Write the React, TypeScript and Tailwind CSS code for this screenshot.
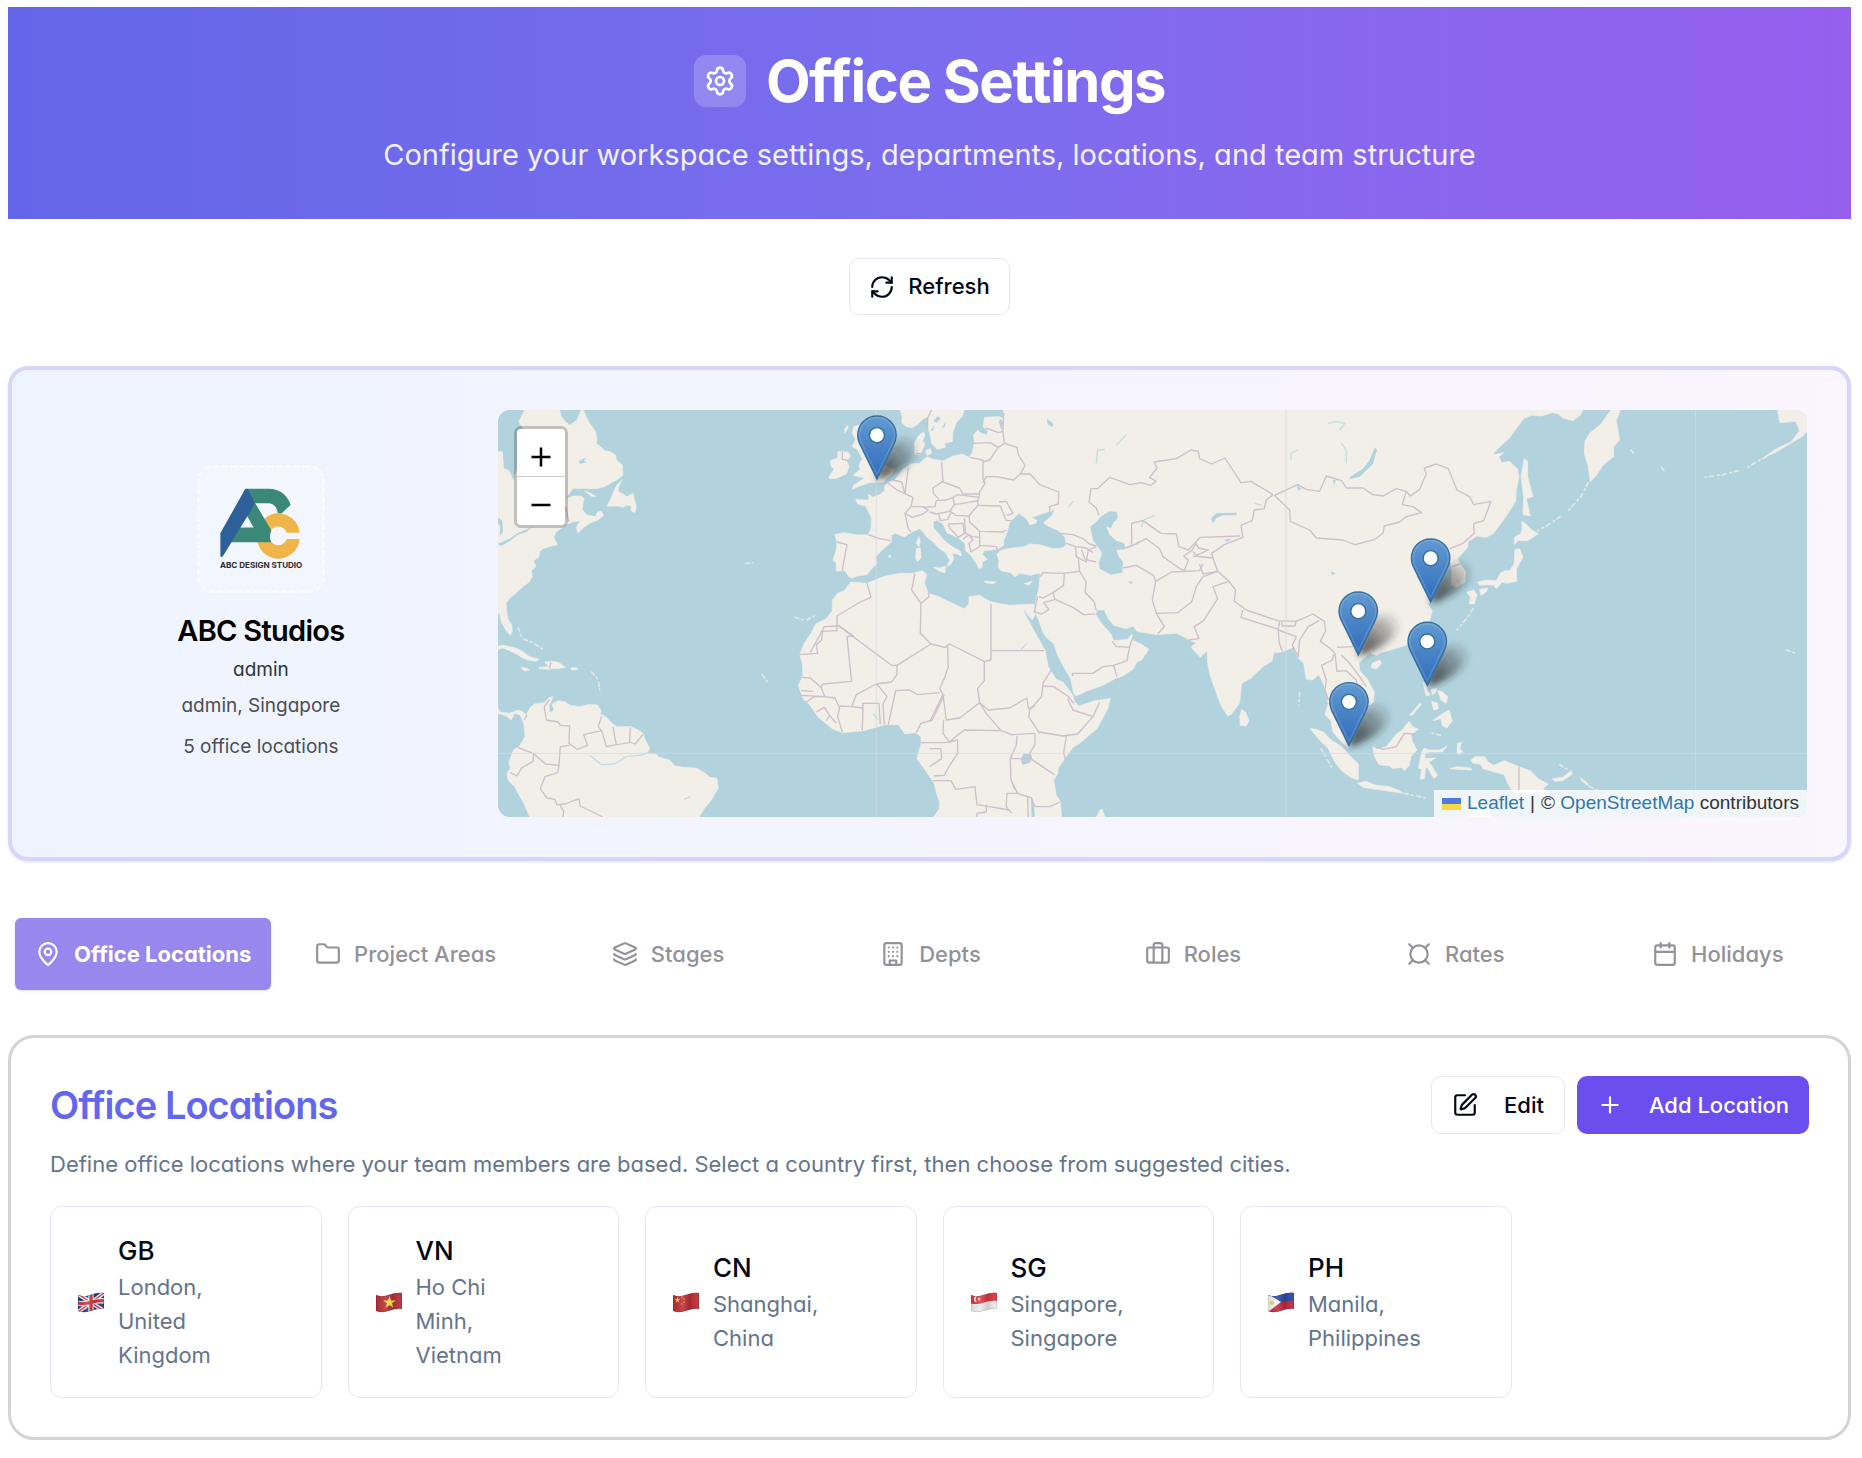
import React from "react";
import {
  Briefcase,
  Calendar,
  Currency,
  Folder,
  Layers,
  MapPin,
  Plus,
  RefreshCw,
  Settings,
  SquarePen,
} from "lucide-react";

/* ---------- map ---------- */

// The chart is digitised in three sheets that share one coordinate system.
const SHEETS = { a: 0, b: 1320, c: 2640 };
type Part = [keyof typeof SHEETS, string];

function trace(parts: Part[]) {
  return parts
    .flatMap(([sheet, text]) =>
      text
        .trim()
        .split(/\s+/)
        .map((pair) => {
          const [x, y] = pair.split(",").map(Number);
          return `${x + SHEETS[sheet]},${y}`;
        }),
    )
    .join(" ");
}

const LAND: Part[][] = [
  // North America
  [["a", "24,155 38,155 40,180 42,205 58,212 72,243 84,200 96,150 100,85 88,65 105,30 210,30 215,50 228,66 240,76 262,60 275,30 283,33 290,52 300,70 318,95 322,118 320,130 335,142 345,152 362,155 378,165 380,180 398,195 400,225 385,238 370,245 345,260 320,266 250,265 232,290 228,298 250,288 275,288 284,296 280,306 278,330 292,345 318,350 322,338 334,333 342,346 325,360 300,370 285,380 265,398 260,382 272,362 250,366 232,372 215,385 200,395 192,412 203,434 178,440 160,446 150,455 148,470 132,482 138,500 125,512 128,530 118,546 100,560 78,580 60,595 50,610 50,625 54,655 66,675 68,695 62,706 50,692 36,668 30,642 24,638"]],
  // Newfoundland
  [["a", "398,238 388,258 385,275 400,282 412,290 430,280 434,300 440,318 436,338 424,332 425,318 410,315 400,322 385,318 352,319 362,300 370,280 380,258"]],
  [["a", "285,273 300,278 318,289 305,289"]],
  // Caribbean
  [["a", "24,738 40,736 60,740 80,745 100,755 120,770 148,778 140,784 115,780 95,772 85,764 60,752 40,744 24,748"]],
  [["a", "165,786 190,784 208,788 228,802 205,806 190,805 180,808 148,806 150,802 178,800"]],
  [["a", "94,803 110,804 120,810 104,813"]],
  [["a", "245,803 262,804 264,809 246,810"]],
  // South America
  [["a", "24,922 32,936 60,940 88,930 104,938 110,944 122,922 134,912 165,908 178,893 190,890 180,915 184,938 192,930 188,912 205,902 225,905 240,915 270,920 295,914 322,914 334,930 332,942 348,950 370,972 380,980 425,980 445,990 460,1000 466,1018 480,1045 472,1062 500,1062 505,1070 540,1080 556,1098 580,1102 620,1104 650,1122 660,1132 682,1135 686,1165 665,1200 645,1225 628,1251 120,1251 105,1215 75,1160 55,1140 52,1120 62,1105 58,1085 72,1050 90,1038 106,1010 104,980 100,965 92,945 75,940 65,960 50,948 34,942 24,940"]],
  // Ireland, Great Britain
  [["a", "1045,155 1075,156 1083,168 1072,182 1078,200 1070,222 1042,234 1020,237 1018,230 1034,206 1024,200 1022,182 1044,174"]],
  [["a", "1092,80 1130,70 1140,90 1125,110 1150,128 1160,160 1185,195 1212,208 1208,222 1190,235 1180,247 1140,248 1110,258 1088,268 1092,255 1125,234 1090,226 1112,208 1108,195 1118,176 1105,150 1088,140 1098,118 1088,100"]],
  [["a", "1066,86 1074,76 1076,84 1064,100"]],
  // Scandinavia
  [
    ["a", "1232,30 1238,50 1236,68 1250,80 1268,83 1285,72 1300,58 1312,50 1314,80 1320,100 1326,130 1342,148 1368,142"],
    ["b", "44,130 68,125 70,96 80,68 98,48 104,30"],
  ],
  [["a", "1276,162 1274,130 1286,108 1302,96 1306,106 1298,124 1306,130 1298,150 1292,164"]],
  [["a", "1308,152 1322,146 1326,160 1312,166"]],
  // Eurasia
  [
    ["b", "222,30 222,55 208,50 165,52 162,68 160,80 175,92 172,106 152,98 145,90 132,104 134,130 128,158 118,172 98,162 70,168 40,183 10,178"],
    ["a", "1312,170 1290,190 1262,192 1255,200 1240,208 1215,240 1200,246 1184,258 1186,272 1170,284 1150,292 1136,282 1138,300 1122,300 1098,298 1104,312 1128,318 1138,338 1146,355 1144,385 1135,405 1100,404 1060,398 1036,404 1042,425 1040,450 1030,480 1040,490 1040,513 1066,512 1078,530 1088,535 1102,528 1132,524 1148,505 1162,490 1158,470 1180,448 1206,425 1204,406 1218,400 1244,411 1268,395 1290,386 1304,400 1312,412"],
    ["b", "10,425 28,445 48,458 60,480 52,500 64,492 72,478 68,460 82,462 96,468 92,454 62,436 42,420 28,402 12,384 10,366 22,360 40,372 52,398 84,412 106,430 108,452 122,464 140,490 148,506 158,502 158,486 172,478 158,462 164,452 186,450 206,446 222,436 222,422 232,398 240,368 255,352 268,340 282,350 292,358 300,374 318,370 322,362 306,352 342,340 376,328 366,348 342,368 350,376 386,392 406,412 410,432 400,444 370,446 330,434 300,432 285,440 240,445 212,452 202,462 208,482 206,500 214,512 242,518 256,530 270,520 304,526 316,522 332,520 328,565 316,612 318,640 328,662 340,698 352,714 372,730 384,766 404,804 424,838 432,880 440,888 470,874 520,856 556,836 580,828 610,808 622,786 636,780 658,748 634,732 612,722 606,702 594,718 552,722 544,702 514,668 498,642 502,630 524,630 536,656 552,676 590,686 610,678 622,694 680,704 740,700 758,708 782,722 800,728 784,742 812,772 832,752 834,790 842,828 854,862 872,912 894,948 906,942 930,908 936,850 962,836 1000,800 1028,782 1032,758 1058,756 1090,742 1106,774 1122,790 1130,838 1148,840 1168,824 1184,858 1196,910 1186,944 1204,962 1210,996 1228,1018 1256,1044 1264,1034 1254,1000 1226,972 1214,958 1216,920 1242,896 1262,920 1280,932 1300,928 1332,906 1334,876 1312,836 1290,812 1288,788 1310,768 1320,760"],
    ["c", "0,758 22,766 32,758 70,748 110,736 150,712 178,670 188,632 174,610 186,606 166,570 140,530 190,500 210,460 236,462 246,500 246,556 262,560 286,546 288,516 270,490 264,476 294,442 296,424 322,408 350,412 372,400 410,348 438,304 440,270 448,230 444,208 420,184 396,188 388,170 402,158 370,164 380,150 416,118 446,78 462,56 486,46 516,48 548,38 566,42 580,54 610,62 632,46 640,30"],
  ],
  // Africa
  [
    ["a", "1084,546 1132,550 1180,530 1230,520 1270,520 1298,512 1312,524 1304,548 1316,580"],
    ["b", "28,590 60,606 104,626 118,612 118,590 150,586 184,606 240,616 312,612 318,640 308,660 284,632 300,668 330,722 346,750 356,800 380,838 400,846 430,886 434,904 448,918 496,902 542,896 534,928 502,986 450,1030 430,1042 386,1104 384,1122 372,1140 380,1186 392,1204 396,1251"],
    ["a", "1332,1251 1348,1228 1350,1206 1340,1180 1334,1150 1308,1112 1282,1076 1294,1032 1294,1010 1278,998 1246,1002 1226,974 1186,974 1122,992 1058,998 1028,986 986,952 960,914 940,896 926,856 940,828 938,790 930,764 944,730 964,700 978,672 1010,656 1028,632 1028,600 1044,580 1064,572 1076,556"],
  ],
  // Mediterranean islands
  [["a", "1288,410 1292,425 1288,440 1280,430"]],
  [["a", "1280,446 1292,444 1294,474 1284,484 1278,476"]],
  [["a", "1332,502 1350,504 1368,498 1366,518 1350,514"]],
  [["b", "164,543 200,546 190,551 168,548"]],
  [["b", "284,551 308,544 298,556"]],
  [["a", "1196,466 1204,468 1200,474"]],
  // Madagascar, Sri Lanka, Hainan
  [["b", "500,1251 512,1228 518,1228 526,1251"]],
  [["b", "936,928 948,936 958,962 950,978 932,976 930,950"]],
  [["b", "1328,790 1350,780 1356,790 1340,808 1324,802"]],
  // Indonesia
  [["b", "1142,986 1160,988 1182,996 1204,1020 1236,1040 1262,1068 1286,1092 1286,1140 1266,1134 1236,1112 1214,1084 1196,1046 1168,1018"]],
  [["b", "1284,1150 1308,1144 1340,1156 1380,1160 1410,1172 1420,1180 1380,1174 1340,1168 1300,1162"]],
  [["c", "10,1040 22,1048 50,1040 78,1004 98,990 118,964 130,980 146,988 124,1004 128,1024 142,1050 124,1070 118,1098 104,1112 96,1102 70,1106 60,1098 28,1094 14,1068"]],
  [["c", "156,1056 164,1044 178,1050 212,1050 232,1038 218,1056 180,1056 166,1062 166,1076 198,1074 178,1086 190,1104 204,1126 192,1136 176,1106 168,1100 164,1136 152,1138 156,1108 146,1104"]],
  [["c", "262,1060 264,1030 276,1026 270,1046 280,1054 270,1064"]],
  [["c", "240,1106 262,1100 304,1104 306,1110 262,1108"]],
  [["c", "304,1080 316,1070 346,1070 354,1086 372,1096 404,1082 448,1100 482,1112 508,1138 536,1152 520,1166 556,1200 590,1220 540,1212 500,1180 460,1180 430,1176 414,1150 404,1124 366,1114 340,1106 332,1092 310,1090"]],
  [["c", "548,1136 580,1132 604,1112 608,1122 580,1142 556,1144"]],
  [["c", "630,1132 650,1146 660,1160 640,1146"]],
  [["c", "290,1251 306,1236 330,1228 350,1220 366,1251"]],
  // Philippines
  [["c", "160,845 172,852 172,872 182,884 170,888 164,868"]],
  [["c", "184,868 202,864 196,880 188,884"]],
  [["c", "204,872 216,874 234,890 230,910 214,900"]],
  [["c", "186,904 204,910 206,926 192,930"]],
  [["c", "190,962 214,944 238,930 248,962 232,984 218,976 214,956"]],
  [["c", "120,946 150,910 156,912 128,946"]],
  // Japan
  [["c", "456,364 466,370 484,388 506,402 474,422 444,422 434,434 434,412 452,402 458,388"]],
  [["c", "436,448 450,446 460,472 440,508 442,544 410,550 398,546 380,566 374,556 354,554 330,556 324,546 350,540 380,542 392,520 404,512 420,512 434,490"]],
  [["c", "330,568 354,564 350,576 334,586"]],
  [["c", "292,576 312,570 322,584 314,612 300,612 302,592"]],
  // Sakhalin, Kamchatka, Alaska
  [["c", "458,210 464,176 474,184 474,230 490,290 470,296 482,348 460,344 462,290 454,230"]],
  [["c", "724,30 752,30 740,62 750,120 732,140 732,170 700,196 680,226 662,246 656,200 644,160 646,124 660,100 694,72"]],
  [["c", "1224,30 1314,30 1314,90 1300,108 1250,138 1220,156 1184,172 1220,146 1264,126 1290,92 1278,64 1230,68"]],
];

const ISLANDS: Part[][] = [
  [["c", "1190,170 1164,184 1130,204"]],
  [["c", "1106,212 1060,224 1004,232"]],
  [["c", "656,248 634,290 590,338"]],
  [["c", "572,350 540,372 504,392"]],
  [["c", "784,150 796,164"]],
  [["c", "876,202 884,214"]],
  [["c", "570,1094 604,1114"]],
  [["c", "1250,750 1284,762"]],
  [["c", "310,626 292,654 262,690"]],
  [["c", "104,1180 168,1194"]],
  [["c", "660,1160 690,1174"]],
  [["c", "212,1006 176,996"]],
  [["a", "86,684 98,716 130,728 160,748"]],
  [["a", "306,816 326,840 330,870"]],
  [["a", "916,652 934,658 948,662 974,648"]],
  [["a", "768,490 790,488"]],
  [["a", "818,824 838,852"]],
  [["b", "1110,878 1108,916"]],
  [["b", "1174,1046 1206,1102"]],
];

const WATER: Part[][] = [
  // Caspian, Aral, Balkhash, Baikal
  [["b", "482,380 500,366 516,348 540,334 562,336 564,356 552,366 544,384 530,380 540,404 560,422 584,430 586,448 560,450 568,470 580,486 578,518 544,524 510,506 508,486 518,460 490,420"]],
  [["b", "618,430 628,422 624,436"]],
  [["b", "844,356 860,340 922,338 920,346 880,346 860,354 850,370"]],
  [["b", "1336,142 1342,150 1330,192 1290,230 1258,238 1262,230 1300,206 1320,180"]],
  [["b", "884,418 906,418 892,426"]],
  // African lakes
  [["b", "282,1060 306,1064 302,1088 278,1094 274,1076"]],
  [["b", "304,1192 312,1210 316,1251 306,1250"]],
  [["b", "240,1112 246,1140 262,1176 250,1164"]],
  // Siberia and inner Asia
  [["b", "352,56 372,72 368,82 354,72"]],
  [["b", "1202,514 1218,520 1208,526"]],
  [["b", "1100,256 1116,266 1106,272"]],
  [["b", "1210,240 1218,240 1214,258"]],
  [["b", "212,56 220,64 216,94 208,66"]],
  [["b", "12,62 24,48 34,56 20,68"]],
  [["b", "2,92 16,74 10,92"]],
  [["b", "36,84 48,66 46,80"]],
  [["b", "596,544 612,546 602,552"]],
  // Great Lakes, Labrador, Amazon
  [["a", "24,352 38,362 40,396 30,408 32,380 24,366"]],
  [["a", "24,432 60,416 84,400 130,380 110,396 84,404 60,424 34,438"]],
  [["a", "266,184 290,172 282,182 292,186 272,192"]],
  [["a", "180,912 188,920 190,932 180,936"]],
];

const RIVERS: Part[][] = [
  [["b", "500,190 504,150 526,148"]],
  [["b", "1196,70 1220,64 1246,70 1230,90"]],
  [["b", "1236,130 1250,150 1250,190"]],
  [["b", "284,632 300,664"]],
  [["b", "416,320 432,304"]],
  [["b", "636,380 642,360 676,346"]],
  [["b", "976,310 996,316"]],
  [["b", "560,136 590,104"]],
  [["b", "274,748 292,730"]],
  [["b", "1084,180 1084,160 1104,150"]],
  [["a", "300,1066 336,1094 374,1092 410,1070 450,1066 480,1058"]],
  [["a", "584,1198 602,1190"]],
  [["a", "1150,940 1164,960"]],
];

const BORDERS: Part[][] = [
  // South America
  [["a", "180,898 164,920 170,960 206,966 212,976 240,978 238,1030 262,1048 294,1036 282,1004 336,992 350,1040 380,1034 370,980"]],
  [["a", "336,948 326,980 336,992"]],
  [["a", "422,982 420,1026 436,1032 460,1004"]],
  [["a", "380,1034 420,1028"]],
  [["a", "84,1042 130,1060 168,1092 208,1096 212,1040 240,1036"]],
  [["a", "132,1062 130,1084 96,1104 82,1128 62,1118"]],
  [["a", "208,1096 204,1118 166,1130 152,1166 172,1194 196,1198 202,1214 226,1212 268,1196 272,1218 340,1251"]],
  [["a", "210,1212 222,1234 220,1251"]],
  [["a", "104,960 112,944"]],
  [["a", "184,786 180,806"]],
  [["a", "228,320 238,366"]],
  // Iberia, France, Low Countries
  [["a", "1042,426 1072,434 1066,466 1058,512"]],
  [["a", "1136,404 1170,416 1204,422"]],
  [["a", "1196,250 1222,270 1244,280 1270,292 1264,320 1246,340 1256,386 1264,396"]],
  [["a", "1210,240 1236,246 1246,280 1256,204"]],
  [["a", "1246,340 1268,352 1300,342 1316,330 1300,320 1264,320"]],
  [["a", "1058,156 1058,178 1080,182"]],
  [["a", "1280,160 1296,162"]],
  [["a", "1326,30 1314,54 1314,84"]],
  // Central Europe
  [
    ["a", "1300,322 1336,320 1340,302 1370,300"],
    ["b", "70,292 84,284 148,292"],
  ],
  [["b", "148,292 150,276 166,250 160,236 160,180 120,172"]],
  [["b", "36,186 40,244 10,264 12,280 28,298"]],
  [["b", "40,246 90,264 100,282 148,282"]],
  [["b", "0,336 20,342 60,334 74,314 70,292"]],
  [["b", "74,314 100,310 146,302"]],
  [["b", "62,334 78,346 118,348 144,316 146,292"]],
  [["b", "144,316 212,318 230,362 246,362"]],
  [["b", "208,306 230,304 250,340 232,346"]],
  [["b", "28,344 32,362 54,358 64,338"]],
  [["b", "56,372 100,370 104,400 86,412 60,384 56,372"]],
  [["b", "118,348 120,366 150,394 220,396 230,390"]],
  [["b", "104,354 108,400 128,410 150,412"]],
  [["b", "150,394 150,436 200,440 204,450"]],
  [["b", "100,418 118,404 130,420 118,430 124,456 152,438"]],
  // Baltic states, Belarus, Ukraine
  [["b", "130,130 182,128 206,142 180,180 160,186"]],
  [["b", "168,84 206,98 220,94 222,38"]],
  [["b", "220,96 224,130 206,142"]],
  [["b", "224,130 262,142 266,164 286,196 272,222 252,240 200,230 170,230 160,248"]],
  [["b", "272,222 302,222 330,254 388,276 386,312 360,320 360,334"]],
  // Caucasus, Turkey
  [["b", "390,400 430,404 460,416 480,432 500,438"]],
  [["b", "410,430 438,440 440,470 470,486 476,450 500,440"]],
  [["b", "440,440 470,444 490,458"]],
  [["b", "456,450 466,478 500,486"]],
  [["b", "332,530 340,518 400,520 450,514 446,476"]],
  // Middle East
  [["b", "404,522 402,556 370,578 340,594 328,590"]],
  [["b", "450,514 470,546 466,576 494,606 500,632"]],
  [["b", "370,578 376,598 430,622 462,644 496,642"]],
  [["b", "376,598 342,608 358,628 336,642 314,636 324,590"]],
  [["b", "430,828 428,820 490,820 520,800 552,796 562,830"]],
  [["b", "552,796 592,782 600,740 610,712"]],
  [["b", "548,724 560,740 600,742"]],
  // Central Asia
  [["b", "508,346 500,324 478,306 484,266 504,266 540,232 600,254 634,248 664,256 680,244 660,232 682,204 674,186 740,176 784,150 806,154 810,176 846,192 886,174 934,248 964,244 1030,284"]],
  [["b", "1030,284 1010,300 1004,326 974,330 968,362 934,376 940,412 884,434 846,460 850,474"]],
  [["b", "606,438 606,370 640,362 694,400 740,402 748,440 776,450 812,412 932,408"]],
  [["b", "582,446 606,438 650,416 690,446 700,470 748,504 764,512"]],
  [["b", "580,504 620,496 672,526 678,544 726,516 810,512 820,492"]],
  [["b", "764,512 776,480 762,468 786,452 800,430 806,444 836,450 800,466 790,454"]],
  [["b", "790,468 850,474 864,514 820,522 810,492"]],
  [["b", "678,544 668,600 680,640 704,680 684,702"]],
  [["b", "680,640 744,638 786,606 800,560 820,530 864,514"]],
  // South Asia
  [["b", "778,720 808,716 794,680 822,662 864,596 850,560 898,544 864,514"]],
  [["b", "898,544 918,570 914,604 950,630 1044,662 1100,664 1150,642 1184,664 1188,692 1172,724 1200,744 1216,760"]],
  [["b", "940,630 934,652 1046,688 1050,664"]],
  [["b", "1056,664 1058,678 1096,678 1100,662"]],
  [["b", "1046,690 1048,726 1058,754"]],
  [["b", "1046,690 1100,710 1088,736 1106,770 1110,720 1136,680 1168,662"]],
  // Indochina
  [["b", "1212,762 1208,780 1176,796 1190,840 1186,870 1196,900"]],
  [["b", "1216,760 1222,814 1250,812 1280,840 1284,860"]],
  [["b", "1222,742 1270,740"]],
  [["b", "1236,766 1260,790 1290,830 1310,860"]],
  // Mongolia, Manchuria
  [
    ["b", "1034,286 1104,254 1130,268 1170,274 1190,228 1236,242 1250,264 1300,264 1330,284"],
    ["c", "40,288 80,266 110,274 98,314 130,320 156,338 110,350 90,366 44,378 40,400 16,418"],
    ["b", "1276,434 1240,420 1160,414 1140,390 1082,364 1080,330 1034,286"],
  ],
  [["c", "110,274 122,288 150,268 170,222 164,204 200,192 236,206 262,270 300,290 312,314 364,304 342,362 312,370 314,400 280,430 240,446"]],
  [["c", "248,500 274,490"]],
  // Borneo, New Guinea
  [["c", "20,1040 40,1048 80,1040 104,1000 132,1002"]],
  [["c", "448,1100 448,1170"]],
  // North Africa
  [["a", "1132,550 1144,592 1112,606 1042,648 1042,674 1206,796 1222,796 1324,732 1292,700 1294,610 1266,570 1276,520"]],
  [["a", "1294,610 1318,590 1316,578"]],
  [["a", "1042,674 1042,692 998,694 996,720 980,734 984,760 928,764"]],
  [["a", "1042,678 1004,680 962,758"]],
  [["a", "1046,676 1092,708 1072,710 1086,844 1000,852 994,862 962,834 938,832"]],
  [["a", "994,862 1006,890 932,886"]],
  [["a", "934,872 970,874"]],
  [["a", "950,906 974,890 1006,890 1036,894 1050,924 1044,950 1058,996"]],
  [["a", "980,936 1004,922 1020,946 1010,962"]],
  [["a", "1020,946 1040,970"]],
  [["a", "1050,918 1086,920 1100,884 1160,852 1206,846 1222,824 1222,796"]],
  [["a", "1086,920 1120,924 1118,990"]],
  [["a", "1120,924 1120,910 1168,910 1172,972"]],
  [["a", "1162,852 1192,890 1180,912 1184,974"]],
  [["a", "1196,974 1212,900 1218,872 1260,870 1284,884 1350,878"]],
  [["a", "1280,998 1294,970 1328,960 1364,884"]],
  [
    ["a", "1324,732 1366,742"],
    ["b", "54,740 56,800 46,830 30,866 40,884"],
  ],
  [["b", "48,740 60,732 164,784 164,842 144,866 150,908"]],
  [["b", "184,612 184,780 164,784"]],
  [["b", "184,752 344,752"]],
  [["b", "40,884 50,960 90,954 150,908 170,940 214,992"]],
  [["b", "0,966 40,884"]],
  [["b", "42,960 40,1000 60,1026 78,1010 104,990 214,992 246,1004 316,1000"]],
  [["b", "150,908 176,930 240,924 292,894 296,926 316,918"]],
  [["b", "366,808 340,850 336,890 300,930 298,952 330,1000"]],
  [["b", "340,858 372,860 414,888 432,910"]],
  [["b", "414,896 430,930 490,950 510,906"]],
  [["b", "490,950 444,1002 400,1008 330,996"]],
  [["b", "410,1008 402,1060 410,1086"]],
  [["b", "316,1000 316,1034 300,1060 306,1078 374,1124"]],
  [["b", "262,1008 260,1036 242,1076 300,1076"]],
  [["b", "242,1076 244,1140 264,1180 306,1194 316,1220 360,1220 392,1206"]],
  [
    ["a", "1294,1028 1364,1028"],
    ["b", "60,1026 84,1020 84,1060 58,1100 44,1126 12,1128"],
  ],
  [["b", "0,1046 34,1046 36,1076 0,1100"]],
  [["b", "10,1142 64,1142 78,1168 136,1160 142,1214 240,1230"]],
  [["b", "170,1214 170,1236 142,1240 142,1251"]],
  [["b", "264,1180 232,1180 230,1220 246,1240"]],
  [["b", "294,1190 296,1251"]],
];

const PINS = [
  { city: "London", x: 1162, y: 238 },
  { city: "Shanghai", x: 2823, y: 607 },
  { city: "Ho Chi Minh", x: 2606, y: 766 },
  { city: "Manila", x: 2813, y: 857 },
  { city: "Singapore", x: 2578, y: 1038 },
];

function WorldMap() {
  return (
    <svg
      viewBox="24 30 3930 1221"
      preserveAspectRatio="xMidYMid slice"
      className="block h-full w-full bg-[#b2d2dd]"
      role="img"
      aria-label="Map of office locations"
    >
      <defs>
        <linearGradient id="pinFill" x1="0" y1="0" x2="0" y2="1">
          <stop offset="0" stopColor="#629bd0" />
          <stop offset="1" stopColor="#2f6abc" />
        </linearGradient>
        <linearGradient id="pinShade" gradientUnits="userSpaceOnUse" x1="0" y1="0" x2="110" y2="-100">
          <stop offset="0" stopColor="#222" stopOpacity="0.85" />
          <stop offset="0.5" stopColor="#222" stopOpacity="0.5" />
          <stop offset="1" stopColor="#222" stopOpacity="0.12" />
        </linearGradient>
        <filter id="pinBlur" x="-50%" y="-50%" width="200%" height="200%">
          <feGaussianBlur stdDeviation="11" />
        </filter>
      </defs>
      <g fill="#f2efe9" stroke="#f2efe9" strokeWidth="2" strokeLinejoin="round">
        {LAND.map((p, i) => (
          <polygon key={i} points={trace(p)} />
        ))}
      </g>
      <g fill="none" stroke="#e4e8e4" strokeWidth="5" strokeDasharray="12 9 5 12" strokeLinecap="round">
        {ISLANDS.map((p, i) => (
          <polyline key={i} points={trace(p)} />
        ))}
      </g>
      <g fill="#b2d2dd">
        {WATER.map((p, i) => (
          <polygon key={i} points={trace(p)} />
        ))}
      </g>
      <g fill="none" stroke="#c3dde2" strokeWidth="4" strokeLinejoin="round">
        {RIVERS.map((p, i) => (
          <polyline key={i} points={trace(p)} />
        ))}
      </g>
      <g fill="none" stroke="#cfbecb" strokeWidth="4" strokeLinejoin="round">
        {BORDERS.map((p, i) => (
          <polyline key={i} points={trace(p)} />
        ))}
      </g>
      <path
        d="M1160 30V1251M2389 30V1251M3618 30V1251M24 1060H3954"
        stroke="#d3dbe0"
        strokeOpacity="0.75"
        strokeWidth="3"
        fill="none"
      />
      {PINS.map((pin) => (
        <path
          key={pin.city}
          transform={`translate(${pin.x} ${pin.y})`}
          d="M0 2C4 -30 30 -110 72 -122C104 -128 130 -104 116 -72C100 -40 50 -10 0 2Z"
          fill="url(#pinShade)"
          filter="url(#pinBlur)"
        />
      ))}
      {PINS.map((pin) => (
        <g key={pin.city} transform={`translate(${pin.x - 60} ${pin.y - 193}) scale(4.8)`}>
          <path
            d="M12.5 40L2.4 19.4C1.1 16.8.5 15 .5 12.6a12 12 0 0 1 24 0c0 2.4-.6 4.2-1.9 6.8Z"
            fill="url(#pinFill)"
            stroke="#36709f"
            strokeWidth="0.9"
          />
          <path
            d="M12.5 37.2L3.4 18.8C2.2 16.5 1.5 15 1.5 12.6a11 11 0 0 1 22 0c0 2.4-.7 3.9-1.9 6.2Z"
            fill="none"
            stroke="#fff"
            strokeOpacity="0.14"
            strokeWidth="1"
          />
          <circle cx="12.5" cy="12.6" r="4.7" fill="#fff" stroke="#36709f" strokeWidth="0.9" />
        </g>
      ))}
    </svg>
  );
}

/* ---------- drawings ---------- */

function StudioLogo() {
  return (
    <svg viewBox="660 385 250 245" className="size-[84px]" role="img" aria-label="ABC Design Studio">
      <path d="M740 388H808C845 388 866 412 873 436L846 461H835C833 442 822 431 806 431H768Z" fill="#3c8878" />
      <path
        d="M900 519A64 66 0 0 0 796 476L774 545A64 66 0 0 0 900 537H862A27 28 0 1 1 862 519Z"
        fill="#efb549"
      />
      <path d="M768 431L816 512C810 524 810 536 816 547H694L716 503H763L742 466Z" fill="#3c8878" />
      <path d="M737 390Q741 386 746 390L768 431L672 588Q665 594 664 586V520Z" fill="#2d5f99" />
      <text
        x="663"
        y="624"
        fontFamily="Inter, sans-serif"
        fontWeight="700"
        fontSize="24"
        fill="#2a2a2e"
      >
        ABC DESIGN STUDIO
      </text>
    </svg>
  );
}

function BuildingIcon({ className }: { className?: string }) {
  return (
    <svg
      viewBox="0 0 24 24"
      fill="none"
      stroke="currentColor"
      strokeWidth="2"
      strokeLinecap="round"
      strokeLinejoin="round"
      className={className}
      aria-hidden="true"
    >
      <rect width="16" height="20" x="4" y="2" rx="2" />
      <path d="M9 22v-4h6v4M8 6h.01M16 6h.01M12 6h.01M12 10h.01M12 14h.01M16 10h.01M16 14h.01M8 10h.01M8 14h.01" />
    </svg>
  );
}

const FLAG_SHAPE = "M0 3C9 7 17 -1 26 1V17C17 15 9 23 0 19Z";

const STAR = "0,-10 2.4,-3.1 9.5,-3.1 3.8,1.2 5.9,8.1 0,3.9 -5.9,8.1 -3.8,1.2 -9.5,-3.1 -2.4,-3.1";

function Flag({ code }: { code: string }) {
  const clip = `flag-${code}`;
  return (
    <svg viewBox="0 0 26 21" className="w-[26px] shrink-0" role="img" aria-label={`Flag of ${code}`}>
      <clipPath id={clip}>
        <path d={FLAG_SHAPE} />
      </clipPath>
      <linearGradient id={`${clip}-fold`}>
        <stop offset="0" stopColor="#000" stopOpacity="0.08" />
        <stop offset="0.35" stopColor="#fff" stopOpacity="0.12" />
        <stop offset="0.65" stopColor="#000" stopOpacity="0.14" />
        <stop offset="1" stopColor="#fff" stopOpacity="0.04" />
      </linearGradient>
      <g clipPath={`url(#${clip})`}>
        {code === "GB" && (
          <>
            <rect width="26" height="21" fill="#25377f" />
            <path d="M0 2L26 19M0 20L26 1" stroke="#f3f3f5" strokeWidth="4" />
            <path d="M0 2L26 19M0 20L26 1" stroke="#cf3340" strokeWidth="1.4" />
            <path d="M13 0V21M0 11C9 14 17 7 26 9" stroke="#f3f3f5" strokeWidth="5.4" fill="none" />
            <path d="M13 0V21M0 11C9 14 17 7 26 9" stroke="#cf3340" strokeWidth="3.2" fill="none" />
          </>
        )}
        {code === "VN" && (
          <>
            <rect width="26" height="21" fill="#b8303a" />
            <polygon points={STAR} transform="translate(13.5 10.5) scale(.66)" fill="#fbe84b" />
          </>
        )}
        {code === "CN" && (
          <>
            <rect width="26" height="21" fill="#bf2e36" />
            <polygon points={STAR} transform="translate(4.5 8) scale(.3)" fill="#f8dd45" />
            <g fill="#e8a53c">
              <circle cx="9" cy="5" r=".8" />
              <circle cx="11" cy="7" r=".8" />
              <circle cx="11" cy="10" r=".8" />
              <circle cx="9" cy="12" r=".8" />
            </g>
          </>
        )}
        {code === "SG" && (
          <>
            <rect width="26" height="21" fill="#ececee" />
            <path d="M0 0H26V9C17 7 9 14 0 11.500Z" fill="#d83a44" />
            <path d="M6 4A3 3 0 1 0 6 10A3.800 3.800 0 0 1 6 4Z" fill="#fff" />
            <circle cx="8" cy="7" r="1.500" fill="#f4b4b8" />
          </>
        )}
        {code === "PH" && (
          <>
            <rect width="26" height="21" fill="#c02a3c" />
            <path d="M0 0H26V9C17 7 9 14 0 11Z" fill="#2b4aa6" />
            <path d="M0 2L13 10L0 20Z" fill="#f4f4f4" />
            <circle cx="4" cy="11" r="2" fill="#f2cb58" />
          </>
        )}
        <rect width="26" height="21" fill={`url(#${clip}-fold)`} />
        <path d={FLAG_SHAPE} fill="none" stroke="#000" strokeOpacity="0.18" />
      </g>
    </svg>
  );
}

/* ---------- page ---------- */

const TABS = [
  { label: "Office Locations", icon: MapPin },
  { label: "Project Areas", icon: Folder },
  { label: "Stages", icon: Layers },
  { label: "Depts", icon: BuildingIcon },
  { label: "Roles", icon: Briefcase },
  { label: "Rates", icon: Currency },
  { label: "Holidays", icon: Calendar },
];

const LOCATIONS = [
  { code: "GB", place: "London, United Kingdom" },
  { code: "VN", place: "Ho Chi Minh, Vietnam" },
  { code: "CN", place: "Shanghai, China" },
  { code: "SG", place: "Singapore, Singapore" },
  { code: "PH", place: "Manila, Philippines" },
];

export default function App() {
  return (
    <div className="bg-white pt-[7px] pr-[11px] pb-[18px] pl-2 font-['Inter',sans-serif] text-[22px] text-[#020817] [font-feature-settings:'cv11']">
      <header className="bg-linear-to-r from-[#6366e8] via-[#7b6dee] to-[#965fee] px-6 pt-[42px] pb-[43px] text-center text-white">
        <div className="flex items-center justify-center gap-5">
          <span className="flex size-[52px] items-center justify-center rounded-xl bg-white/20">
            <Settings className="size-8" />
          </span>
          <h1 className="text-[58px] leading-[64px] font-bold tracking-tight">Office Settings</h1>
        </div>
        <p className="mt-5 text-[29px] leading-[43px] font-normal text-white/90">
          Configure your workspace settings, departments, locations, and team structure
        </p>
      </header>

      <div className="mt-[39px] flex justify-center">
        <button
          type="button"
          className="flex h-[57px] items-center gap-[13px] rounded-[10px] border border-[#e2e8f0] bg-white px-[19px] font-medium"
        >
          <RefreshCw className="size-[26px]" />
          Refresh
        </button>
      </div>

      <section className="mt-[51px] grid grid-cols-4 gap-7 rounded-[20px] border-4 border-[#d8d5fb] bg-linear-to-r from-[#eef4ff] via-[#f5f4fe] to-[#faf5ff] p-10 shadow-sm">
        <div className="flex flex-col items-center justify-center text-center text-[19px] leading-[30px] text-[#4b4d53]">
          <div className="flex size-32 items-center justify-center rounded-2xl border-3 border-dashed border-white/60 bg-white/20">
            <StudioLogo />
          </div>
          <h2 className="mt-[17px] text-[29px] leading-[42px] font-semibold tracking-tight text-black">
            ABC Studios
          </h2>
          <p className="mt-[3px] text-[#2f3238]">admin</p>
          <p className="mt-1.5">admin, Singapore</p>
          <p className="mt-[11px]">5 office locations</p>
        </div>
        <div className="relative col-span-3 h-[407px] overflow-hidden rounded-xl">
          <WorldMap />
          <div className="absolute top-4 left-4 flex flex-col overflow-hidden rounded-[7px] border-3 border-black/20 bg-clip-padding">
            <button
              type="button"
              aria-label="Zoom in"
              className="flex h-12 w-12 items-center justify-center border-b border-[#ccc] bg-white pt-2 text-black"
            >
              <svg viewBox="0 0 20 20" className="size-5" aria-hidden="true">
                <path d="M10 0.500V19.500M0.500 10H19.500" stroke="currentColor" strokeWidth="2.5" />
              </svg>
            </button>
            <button
              type="button"
              aria-label="Zoom out"
              className="flex h-12 w-12 items-center justify-center bg-white pt-2 text-black"
            >
              <svg viewBox="0 0 20 20" className="size-5" aria-hidden="true">
                <path d="M0.500 10H19.500" stroke="currentColor" strokeWidth="2.5" />
              </svg>
            </button>
          </div>
          <div className="absolute right-0 bottom-0 flex h-[27px] items-center gap-1.5 bg-white/80 px-2 font-['Liberation_Sans',sans-serif] text-[19px] text-[#333]">
            <svg viewBox="0 0 19 12" className="w-[19px]" aria-hidden="true">
              <path fill="#4f7ade" d="M0 0h19v6H0z" />
              <path fill="#f8d648" d="M0 6h19v6H0z" />
            </svg>
            <a href="#leaflet" className="text-[#2f78a8]">
              Leaflet
            </a>
            <span>|</span>
            <span>
              ©{" "}
              <a href="#openstreetmap" className="text-[#2f78a8]">
                OpenStreetMap
              </a>{" "}
              contributors
            </span>
          </div>
        </div>
      </section>

      <nav className="mt-[57px] grid grid-cols-7 gap-1.5 pr-[5px] pl-[7px]" role="tablist">
        {TABS.map(({ label, icon: Icon }, i) => (
          <button
            key={label}
            type="button"
            role="tab"
            aria-selected={i === 0}
            className={
              i === 0
                ? "flex h-[72px] items-center justify-center gap-[13px] rounded-md bg-[#9887ed] font-bold whitespace-nowrap text-white shadow-sm"
                : "flex h-[72px] items-center justify-center gap-[13px] rounded-md font-medium whitespace-nowrap text-[#929299]"
            }
          >
            <Icon className="size-[26px] shrink-0" />
            {label}
          </button>
        ))}
      </nav>

      <section className="mt-[45px] rounded-[26px] border-3 border-[#d3d3d8] bg-white px-[39px] pt-[38px] pb-[39px]">
        <div className="flex items-center justify-between">
          <h2 className="text-[38px] leading-[48px] font-semibold tracking-tight text-[#6366ee]">
            Office Locations
          </h2>
          <div className="flex gap-3">
            <button
              type="button"
              className="flex h-[58px] items-center gap-[26px] rounded-[10px] border border-[#e2e8f0] bg-white px-5 font-medium"
            >
              <SquarePen className="size-[26px]" />
              Edit
            </button>
            <button
              type="button"
              className="flex h-[58px] items-center gap-[26px] rounded-[10px] bg-[#6b4eee] px-5 font-medium text-white"
            >
              <Plus className="size-[26px]" />
              Add Location
            </button>
          </div>
        </div>
        <p className="mt-[13px] leading-[34px] text-[#64748b]">
          Define office locations where your team members are based. Select a country first, then
          choose from suggested cities.
        </p>
        <ul className="mt-[25px] grid grid-cols-6 gap-[26px]">
          {LOCATIONS.map(({ code, place }) => (
            <li
              key={code}
              className="flex min-h-48 items-center gap-[14px] rounded-xl border border-[#e2e8f0] px-[27px] py-6"
            >
              <Flag code={code} />
              <div className="max-w-[120px]">
                <h3 className="text-[26px] leading-[38px] font-medium">{code}</h3>
                <p className="leading-[34px] text-[#64748b]">{place}</p>
              </div>
            </li>
          ))}
        </ul>
      </section>
    </div>
  );
}
